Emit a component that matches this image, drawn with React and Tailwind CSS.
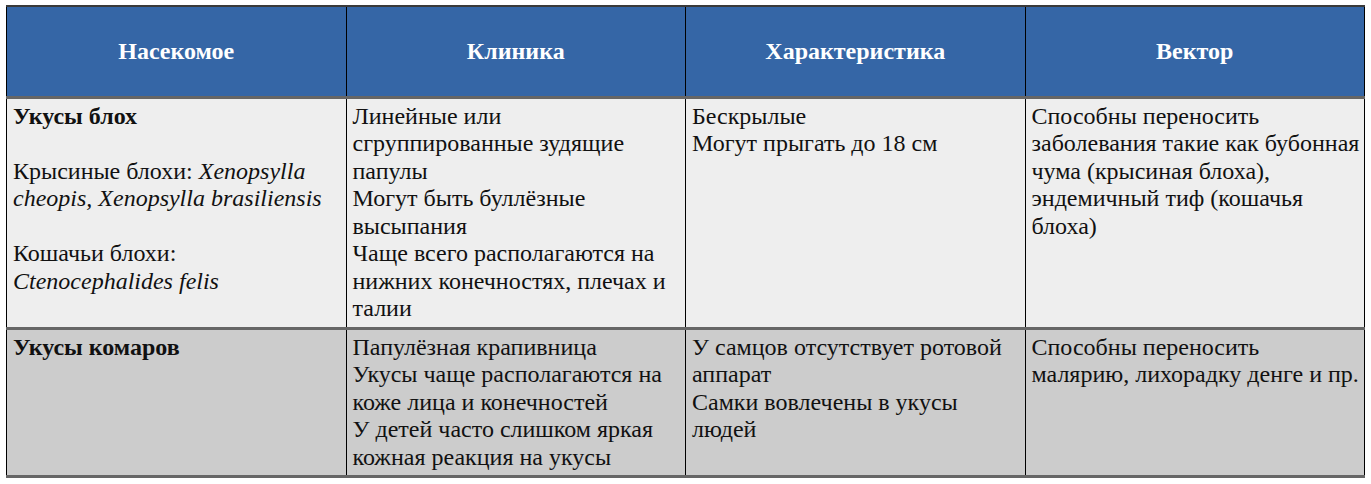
import React from 'react';

const headers = ['Насекомое', 'Клиника', 'Характеристика', 'Вектор'];

const cell = 'border-x border-black pl-[6px] pr-1 pt-[4px] pb-1 align-top';

const App = () => {
  return (
    <div className="min-h-[484px] bg-white pl-[6px] pt-[5px]" style={{ fontFamily: '"Liberation Serif", "Times New Roman", serif' }}>
      <table className="w-[1359px] table-fixed border-collapse text-[24px] leading-[27.5px] text-[#111]">
        <thead>
          <tr className="h-[91px] border-t-2 border-t-[#3a3a3a] bg-[#3566a6]">
            {headers.map((title) => (
              <th key={title} className="border-x border-black border-b-[3px] border-b-[#666] px-2 text-center font-bold text-white">
                {title}
              </th>
            ))}
          </tr>
        </thead>
        <tbody>
          <tr className="bg-[#eeeeee]">
            <td className={`${cell} border-b-[3px] border-b-[#666] h-[229px]`}>
              <p className="font-bold">Укусы блох</p>
              <p className="mt-[27.5px]">
                Крысиные блохи: <i>Xenopsylla cheopis, Xenopsylla brasiliensis</i>
              </p>
              <p className="mt-[27.5px]">Кошачьи блохи:</p>
              <p><i>Ctenocephalides felis</i></p>
            </td>
            <td className={`${cell} border-b-[3px] border-b-[#666]`}>
              <p>Линейные или сгруппированные зудящие папулы</p>
              <p>Могут быть буллёзные высыпания</p>
              <p>Чаще всего располагаются на нижних конечностях, плечах и талии</p>
            </td>
            <td className={`${cell} border-b-[3px] border-b-[#666]`}>
              <p>Бескрылые</p>
              <p>Могут прыгать до 18 см</p>
            </td>
            <td className={`${cell} border-b-[3px] border-b-[#666]`}>
              <p>Способны переносить заболевания такие как бубонная чума (крысиная блоха), эндемичный тиф (кошачья блоха)</p>
            </td>
          </tr>
          <tr className="bg-[#cccccc]">
            <td className={`${cell} border-b-[3px] border-b-[#666] h-[148px]`}>
              <p className="font-bold">Укусы комаров</p>
            </td>
            <td className={`${cell} border-b-[3px] border-b-[#666]`}>
              <p>Папулёзная крапивница</p>
              <p>Укусы чаще располагаются на коже лица и конечностей</p>
              <p>У детей часто слишком яркая кожная реакция на укусы</p>
            </td>
            <td className={`${cell} border-b-[3px] border-b-[#666]`}>
              <p>У самцов отсутствует ротовой аппарат</p>
              <p>Самки вовлечены в укусы людей</p>
            </td>
            <td className={`${cell} border-b-[3px] border-b-[#666]`}>
              <p>Способны переносить малярию, лихорадку денге и пр.</p>
            </td>
          </tr>
        </tbody>
      </table>
    </div>
  );
};

export default App;
